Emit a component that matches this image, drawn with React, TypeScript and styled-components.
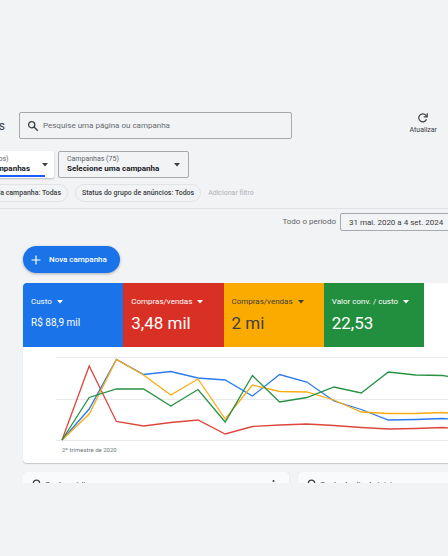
import React from "react";
import styled, { createGlobalStyle } from "styled-components";

const Global = createGlobalStyle`
  * { box-sizing: border-box; }
  body { margin: 0; background: #f1f3f4; font-family: Roboto, "Liberation Sans", sans-serif; color: #3c4043; overflow-x: hidden; }
  button, input { font-family: inherit; color: inherit; }
`;

const Page = styled.main`
  min-height: 100vh;
  padding-top: 112px;
  overflow: hidden;
`;

const Header = styled.header`
  display: flex;
  align-items: center;
  height: 27px;
  padding-right: 11px;
`;

const Clip = styled.div<{ $width: number }>`
  flex: none;
  width: ${(p) => p.$width}px;
  display: flex;
  justify-content: flex-end;
`;

const Title = styled.h1`
  margin: 0;
  font-size: 12px;
  line-height: 16px;
  font-weight: 400;
`;

const SearchBox = styled.label`
  flex: 0 1 273px;
  display: flex;
  align-items: center;
  gap: 4px;
  height: 27px;
  margin-left: 14px;
  padding: 0 7px;
  border: 1px solid #a6a9ad;
  border-radius: 2px;
`;

const SearchInput = styled.input`
  flex: 1;
  min-width: 0;
  padding: 0;
  border: 0;
  outline: 0;
  background: transparent;
  font-size: 8px;
  line-height: 12px;
  &::placeholder { color: #686c70; opacity: 1; }
`;

const Refresh = styled.button`
  display: flex;
  flex-direction: column;
  align-items: center;
  gap: 3px;
  margin-left: auto;
  padding: 0 0 4px;
  border: 0;
  background: none;
  font-size: 7px;
  line-height: 8px;
`;

const Selectors = styled.div`
  display: flex;
  gap: 4px;
  margin-top: 12px;
`;

const Picker = styled.button<{ $active?: boolean }>`
  flex: none;
  display: flex;
  align-items: center;
  justify-content: space-between;
  gap: 12px;
  width: ${(p) => (p.$active ? "auto" : "131px")};
  height: 27px;
  padding: 0 ${(p) => (p.$active ? 5 : 8)}px 0 8px;
  border: 1px solid ${(p) => (p.$active ? "#fff" : "#a6a9ad")};
  border-radius: 2px;
  background: ${(p) => (p.$active ? "linear-gradient(#1a5cff, #1a5cff) 0 100% / calc(100% - 8px) 2px no-repeat #fff" : "transparent")};
  box-shadow: ${(p) => (p.$active ? "0 1px 2px #b9bcc0" : "none")};
  text-align: left;
  font-size: 7px;
  line-height: 9px;
`;

const PickerText = styled.span`
  display: flex;
  flex-direction: column;
  white-space: nowrap;
  color: #5f6368;
`;

const Strong = styled.strong`
  font-size: 8px;
  line-height: 10px;
  font-weight: 700;
  color: #202124;
`;

const Filters = styled.div`
  display: flex;
  align-items: center;
  gap: 7px;
  margin-top: 6px;
  padding-bottom: 6px;
  border-bottom: 1px solid #dfe1e4;
`;

const Chip = styled.button`
  flex: none;
  height: 18px;
  padding: 0 6px;
  border: 1px solid #e1e3e6;
  border-radius: 9px;
  background: transparent;
  white-space: nowrap;
  font-size: 7px;
  font-weight: 500;
  line-height: 10px;
`;

const AddFilter = styled.button`
  padding: 0;
  border: 0;
  background: none;
  white-space: nowrap;
  font-size: 7px;
  line-height: 10px;
  color: #aeb1b5;
`;

const Period = styled.div`
  display: flex;
  justify-content: flex-end;
  align-items: center;
  gap: 4px;
  margin-top: 4px;
  margin-right: -10px;
  font-size: 8px;
  line-height: 12px;
  color: #5f6368;
`;

const DateButton = styled.button`
  width: 118px;
  height: 18px;
  padding: 0 8px;
  border: 1px solid #a6a9ad;
  border-radius: 2px;
  background: transparent;
  text-align: left;
  white-space: nowrap;
  font-size: 8px;
  color: #3c4043;
`;

const Content = styled.section`
  padding: 15px 0 0 23px;
`;

const NewCampaign = styled.button`
  display: flex;
  align-items: center;
  gap: 8px;
  width: 97px;
  height: 27px;
  padding: 0 8px;
  border: 0;
  border-radius: 14px;
  background: #1a73e8;
  box-shadow: 0 1px 3px #a9adb3;
  color: #fff;
  font-size: 8px;
  font-weight: 500;
  white-space: nowrap;
`;

const Card = styled.section`
  margin-top: 10px;
  padding-bottom: 8px;
  border-radius: 4px 0 0 4px;
  background: #fff;
  box-shadow: 0 1px 1px #c4c6c9;
  overflow: hidden;
`;

const Metrics = styled.div`
  display: grid;
  grid-template-columns: repeat(4, minmax(0, 1fr));
  margin-right: 24px;
`;

const Metric = styled.button<{ $color: string; $dark?: boolean }>`
  display: flex;
  flex-direction: column;
  height: 64px;
  padding: 13px 0 0 8px;
  border: 0;
  background: ${(p) => p.$color};
  color: ${(p) => (p.$dark ? "#3c4043" : "#fff")};
  text-align: left;
  white-space: nowrap;
`;

const MetricName = styled.span`
  display: flex;
  align-items: center;
  gap: 5px;
  font-size: 8px;
  line-height: 12px;
`;

const MetricValue = styled.span<{ $small?: boolean }>`
  font-size: ${(p) => (p.$small ? 10 : 17)}px;
  line-height: 20px;
  margin-top: 5px;
`;

const Plot = styled.svg`
  display: block;
  width: 392px;
  height: 97px;
  margin-left: 33px;
`;

const AxisLabel = styled.div`
  padding-left: 39px;
  font-size: 6px;
  line-height: 11px;
  color: #70757a;
`;

const Panels = styled.div`
  display: grid;
  grid-template-columns: 266px 266px;
  gap: 9px;
  height: 11px;
  margin-top: 9px;
  overflow: hidden;
`;

const Panel = styled.section`
  display: flex;
  align-items: flex-start;
  gap: 4px;
  height: 40px;
  padding: 7px 14px 0 9px;
  border-radius: 3px;
  background: #f9fafb;
  box-shadow: 0 0 1px #c4c6c9;
`;

const PanelTitle = styled.h2`
  flex: 1;
  margin: 0;
  font-size: 8px;
  font-weight: 400;
  line-height: 12px;
`;

const Arrow = () => (
  <svg width="6" height="4" viewBox="0 0 6 4" aria-hidden="true">
    <path d="M0 0h6L3 3.4z" fill="currentColor" />
  </svg>
);

const SearchIcon = () => (
  <svg width="12" height="12" viewBox="0 0 12 12" fill="none" stroke="#3c4043" strokeWidth="1.3" aria-hidden="true">
    <circle cx="4.7" cy="4.7" r="3.1" />
    <path d="M7 7l3.8 3.8" />
  </svg>
);

const RefreshIcon = () => (
  <svg width="10" height="10" viewBox="0 0 10 10" fill="none" stroke="#3c4043" strokeWidth="1.2" aria-hidden="true">
    <path d="M8.5 6.3A4 4 0 1 1 7.8 2.2L8.8 3.3" />
    <path d="M9.2.3v3.5H5.7" />
  </svg>
);

const PanelIcon = () => (
  <svg width="9" height="9" viewBox="0 0 9 9" fill="none" stroke="#3c4043" strokeWidth="1.2" aria-hidden="true">
    <circle cx="4.5" cy="4.3" r="3.2" />
  </svg>
);

const MoreIcon = () => (
  <svg width="3" height="10" viewBox="0 0 3 10" fill="#3c4043" aria-hidden="true">
    <circle cx="1.5" cy="2" r="1" />
    <circle cx="1.5" cy="5" r="1" />
    <circle cx="1.5" cy="8" r="1" />
  </svg>
);

const metrics = [
  { name: "Custo", value: "R$ 88,9 mil", color: "#1a73e8", small: true },
  { name: "Compras/vendas", value: "3,48 mil", color: "#d93025" },
  { name: "Compras/vendas", value: "2 mi", color: "#fbab00", dark: true },
  { name: "Valor conv. / custo", value: "22,53", color: "#218f3d" },
];

const series = [
  { color: "#dc473d", y: [93, 19, 74.5, 79, 75.5, 73, 87, 79.5, 78, 77, 78.5, 80.5, 82, 81.5, 80.5, 82] },
  { color: "#2b7af0", y: [93, 62, 12.5, 27.5, 24.5, 31, 33, 49, 27.5, 35, 54, 62.5, 73, 72.5, 71.5, 73] },
  { color: "#f9ab12", y: [93, 67, 12.5, 28, 48, 32, 72, 38, 44.5, 45, 53, 65, 66.5, 66.5, 65.5, 68] },
  { color: "#279144", y: [93, 50.5, 42, 42, 59, 42.5, 75, 28.5, 55, 50.5, 40, 46, 25, 28, 28.5, 33] },
];

export default function App() {
  return (
    <>
      <Global />
      <Page>
        <Header>
          <Clip $width={5}><Title>Campanhas</Title></Clip>
          <SearchBox>
            <SearchIcon />
            <SearchInput type="search" aria-label="Pesquisar" placeholder="Pesquise uma página ou campanha" />
          </SearchBox>
          <Refresh><RefreshIcon />Atualizar</Refresh>
        </Header>
        <Selectors>
          <Clip $width={54}>
            <Picker $active>
              <PickerText>Exibições (todos)<Strong>Todas as campanhas</Strong></PickerText>
              <Arrow />
            </Picker>
          </Clip>
          <Picker>
            <PickerText>Campanhas (75)<Strong>Selecione uma campanha</Strong></PickerText>
            <Arrow />
          </Picker>
        </Selectors>
        <Filters>
          <Clip $width={68}><Chip>Status da campanha: Todas</Chip></Clip>
          <Chip>Status do grupo de anúncios: Todos</Chip>
          <AddFilter>Adicionar filtro</AddFilter>
        </Filters>
        <Period>
          Todo o período
          <DateButton>31 mai. 2020 a 4 set. 2024</DateButton>
        </Period>
        <Content>
          <NewCampaign>
            <svg width="10" height="10" viewBox="0 0 10 10" stroke="#fff" strokeWidth="1.2" aria-hidden="true">
              <path d="M5 .5v9M.5 5h9" />
            </svg>
            Nova campanha
          </NewCampaign>
          <Card>
            <Metrics>
              {metrics.map((m) => (
                <Metric key={m.color} $color={m.color} $dark={m.dark}>
                  <MetricName>{m.name}<Arrow /></MetricName>
                  <MetricValue $small={m.small}>{m.value}</MetricValue>
                </Metric>
              ))}
            </Metrics>
            <Plot viewBox="0 0 392 97" role="img" aria-label="Desempenho por trimestre">
              <path d="M0 10.5h392M0 52.5h392M0 93.5h392" stroke="#e8eaed" />
              {series.map((s) => (
                <polyline
                  key={s.color}
                  fill="none"
                  stroke={s.color}
                  strokeWidth="1.3"
                  points={s.y.map((y, i) => `${6 + i * 27.2},${y}`).join(" ")}
                />
              ))}
            </Plot>
            <AxisLabel>2º trimestre de 2020</AxisLabel>
          </Card>
          <Panels>
            <Panel><PanelIcon /><PanelTitle>Custo médio</PanelTitle><MoreIcon /></Panel>
            <Panel><PanelIcon /><PanelTitle>Custo do dia de início</PanelTitle><MoreIcon /></Panel>
          </Panels>
        </Content>
      </Page>
    </>
  );
}
